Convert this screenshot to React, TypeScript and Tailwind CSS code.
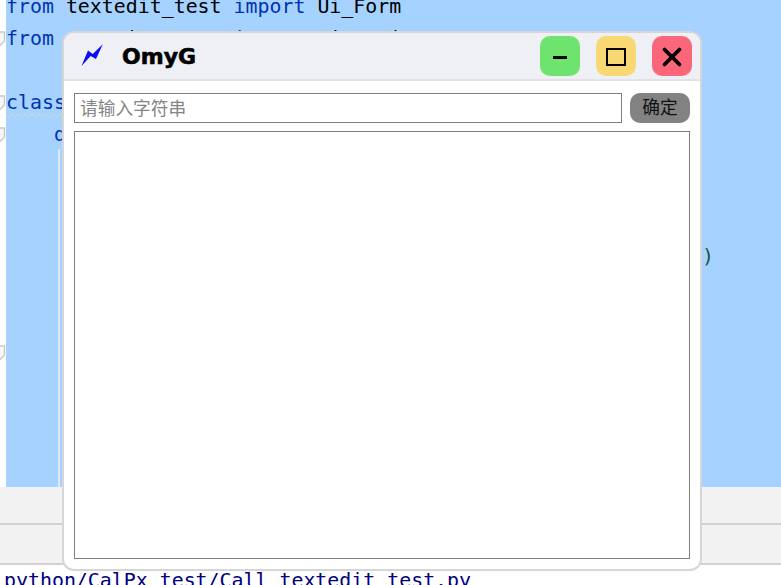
import { X } from 'lucide-react'

function FoldMark() {
  return (
    <svg width="6" height="16" viewBox="0 0 6 16" className="shrink-0">
      <path d="M-4 1 H4.5 V10 L0 14.5 H-4" fill="#f7f7f7" stroke="#c9c9c9" strokeWidth="1.5" />
    </svg>
  )
}

/* ── Editor behind the floating window ── */

function CodeLine({ mark, children }: { mark?: boolean; children?: React.ReactNode }) {
  return (
    <div className="flex h-[32px] items-center">
      <div className="flex w-[6px] shrink-0 items-center">{mark && <FoldMark />}</div>
      <div className="whitespace-pre">{children}</div>
    </div>
  )
}

function Editor() {
  return (
    <div className="flex h-[585px] flex-col font-['DejaVu_Sans_Mono',monospace] text-[19.9px] leading-[32px]">
      <div className="relative mt-[-9px] h-[496px] shrink-0 overflow-hidden bg-[linear-gradient(to_right,#ffffff_6px,#a6d2ff_6px)]">
        <CodeLine>
          <span className="text-[#0033b3]">from</span> textedit_test <span className="text-[#0033b3]">import</span> Ui_Form
        </CodeLine>
        <CodeLine mark>
          <span className="text-[#0033b3]">from</span> numeric_queue <span className="text-[#0033b3]">import</span> Minor_in
        </CodeLine>
        <CodeLine />
        <CodeLine mark>
          <span className="text-[#0033b3] underline decoration-wavy decoration-[#d8d8c0] decoration-1 underline-offset-4">class</span>
        </CodeLine>
        <CodeLine mark>
          {'    '}
          <span className="text-[#0033b3]">d</span>
        </CodeLine>
        <div className="absolute left-[58px] top-[158px] bottom-0 w-[2px] bg-[#dfe8f2]" />
        <div className="absolute left-0 top-[354px]">
          <FoldMark />
        </div>
        <div className="absolute left-[702px] top-[250px] text-[#0f5c3a]">)</div>
      </div>
      <div className="h-[36px] shrink-0 bg-[#f2f2f2]" />
      <div className="h-[2px] shrink-0 bg-[#d1d1d1]" />
      <div className="h-[40px] shrink-0 border-b-2 border-[#d1d1d1] bg-[#f2f2f2]" />
      <div className="flex-1 overflow-hidden bg-white pl-[4px] text-[#00007f]">python/CalPx_test/Call_textedit_test.py</div>
    </div>
  )
}

/* ── Floating window ── */

function WindowButton({ className, children }: { className: string; children: React.ReactNode }) {
  return (
    <button className={`flex h-[40px] w-[40px] items-center justify-center rounded-[10px] ${className}`}>
      {children}
    </button>
  )
}

function FloatingWindow() {
  return (
    <div className="absolute left-[62px] top-[31px] flex h-[540px] w-[640px] flex-col overflow-hidden rounded-[12px] border-2 border-[#d6d6d6] bg-white">
      <div className="flex h-[48px] shrink-0 items-center border-b-2 border-[#e3e3e6] bg-[#eef0f5] pl-[16px] pr-[8px]">
        <svg width="24" height="24" viewBox="0 0 24 24" className="shrink-0">
          <path d="M1.5 22 L8 6.5 L12.7 10 L22.8 0.3 L16 15 L10.7 12 Z" fill="#0c0cf5" />
        </svg>
        <span className="ml-[18px] mt-[1px] font-['DejaVu_Sans',sans-serif] text-[22px] leading-none font-bold text-black [-webkit-text-stroke:0.6px_black]">
          OmyG
        </span>
        <div className="ml-auto flex gap-[16px]">
          <WindowButton className="bg-[#6ee36e]">
            <div className="mt-[3px] h-[3px] w-[14px] bg-black" />
          </WindowButton>
          <WindowButton className="bg-[#f8d775]">
            <div className="mt-[2px] h-[18px] w-[20px] border-[2.5px] border-black" />
          </WindowButton>
          <WindowButton className="bg-[#fb667a]">
            <X size={30} strokeWidth={3} color="#000" className="mt-[2px]" />
          </WindowButton>
        </div>
      </div>
      <div className="flex min-h-0 flex-1 flex-col gap-[8px] px-[10px] pt-[12px] pb-[10px]">
        <div className="flex gap-[8px]">
          <input
            placeholder="请输入字符串"
            className="h-[30px] w-[548px] border border-[#7f7f7f] px-[5px] pb-[3px] font-['Noto_Sans_CJK_SC',sans-serif] text-[17.7px] leading-none outline-none placeholder:text-[#858585]"
          />
          <button className="h-[30px] w-[60px] rounded-[10px] bg-[#828282] pb-[2px] font-['Noto_Sans_CJK_SC',sans-serif] text-[17.7px] leading-none text-[#111]">
            确定
          </button>
        </div>
        <div className="min-h-0 flex-1 border border-[#7f7f7f]" />
      </div>
    </div>
  )
}

export default function App() {
  return (
    <div className="relative h-[585px] w-[781px] overflow-hidden bg-white">
      <Editor />
      <FloatingWindow />
    </div>
  )
}
